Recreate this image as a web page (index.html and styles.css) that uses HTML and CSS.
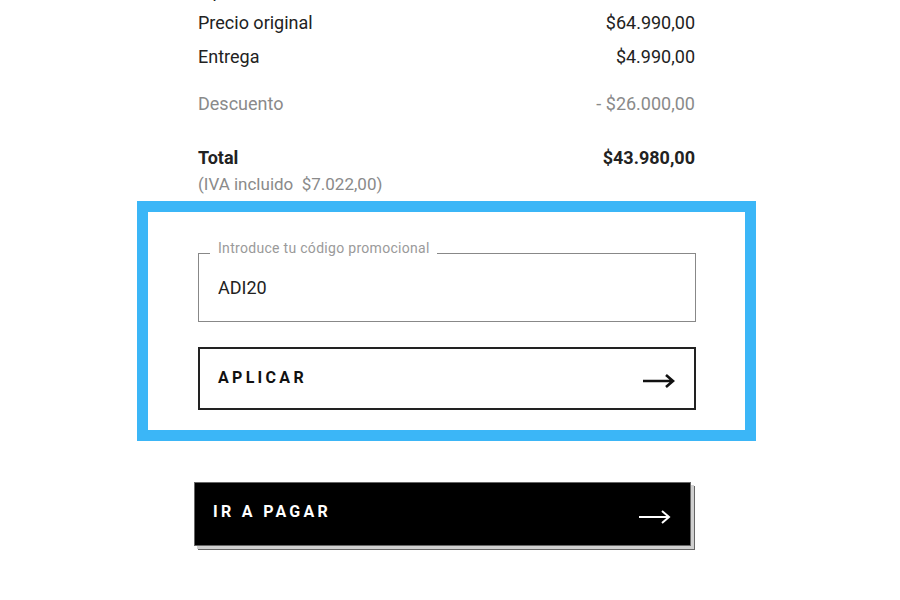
FILE: index.html
```html
<!DOCTYPE html>
<html lang="es">
<head>
    <meta charset="UTF-8">
    <meta name="viewport" content="width=device-width, initial-scale=1.0">
    <title>Resumen del pedido</title>
    <link rel="stylesheet" href="styles.css">
</head>
<body>

<div class="summary">
    <div class="row">
        <span>1 producto</span>
        <span>$64.990,00</span>
    </div>
    <div class="row">
        <span>Precio original</span>
        <span>$64.990,00</span>
    </div>
    <div class="row">
        <span>Entrega</span>
        <span>$4.990,00</span>
    </div>
    <div class="row discount">
        <span>Descuento</span>
        <span>- $26.000,00</span>
    </div>
    <div class="row total">
        <span>Total</span>
        <span>$43.980,00</span>
    </div>
    <div class="tax">(IVA incluido&nbsp; $7.022,00)</div>
</div>

<div class="promo-box">
    <div class="promo-field">
        <label for="promo">Introduce tu código promocional</label>
        <input type="text" id="promo" value="ADI20">
    </div>
    <button class="btn btn-outline">
        <span>APLICAR</span>
        <svg width="34" height="16" viewBox="0 0 34 16"><path d="M1 8h30M24 2l7 6-7 6" fill="none" stroke="currentColor" stroke-width="2.6"/></svg>
    </button>
</div>

<div class="checkout">
    <button class="btn btn-dark">
        <span>IR A PAGAR</span>
        <svg width="34" height="16" viewBox="0 0 34 16"><path d="M1 8h30M24 2l7 6-7 6" fill="none" stroke="currentColor" stroke-width="2"/></svg>
    </button>
</div>

</body>
</html>
```

FILE: styles.css
```css
body {
    margin: 0;
    background-color: #fff;
    color: #222;
    font-family: Roboto, "Noto Sans", sans-serif;
}
.summary {
    width: 497px;
    margin: -24px 0 0 198px;
}
.row {
    display: flex;
    justify-content: space-between;
    font-size: 18px;
    line-height: 34px;
}
.row:first-child {
    line-height: 30px;
}
.discount {
    margin-top: 13px;
    color: #8a8a8a;
}
.total {
    margin-top: 24px;
    line-height: 26px;
    font-weight: bold;
}
.tax {
    margin-top: 2px;
    font-size: 17px;
    line-height: 22px;
    color: #8a8a8a;
}
.promo-box {
    box-sizing: border-box;
    width: 619px;
    margin: 6px 0 0 137px;
    padding: 41px 49px 20px 50px;
    border: 11px solid #3bb6f7;
}
.promo-field {
    position: relative;
    height: 69px;
    border: 1px solid #888;
    box-sizing: border-box;
}
.promo-field label {
    position: absolute;
    top: -14px;
    left: 11px;
    padding: 0 7px 0 8px;
    background-color: #fff;
    color: #9a9a9a;
    font-size: 14px;
    letter-spacing: 0.3px;
    line-height: 16px;
}
.promo-field input {
    box-sizing: border-box;
    width: 100%;
    height: 100%;
    padding: 0 0 0 19px;
    border: none;
    outline: none;
    background: none;
    font-family: inherit;
    font-size: 18px;
    color: #222;
}
.btn {
    box-sizing: border-box;
    display: flex;
    align-items: center;
    justify-content: space-between;
    width: 100%;
    font-family: inherit;
    font-size: 16px;
    font-weight: bold;
    letter-spacing: 3.3px;
    cursor: pointer;
}
.btn-outline {
    height: 63px;
    margin-top: 25px;
    padding: 0 18px 0 18px;
    border: 2px solid #222;
    background-color: #fff;
    color: #111;
}
.btn-outline span {
    margin-top: -3px;
}
.btn-outline svg {
    margin-top: 4px;
}
.checkout {
    width: 497px;
    margin: 41px 0 40px 194px;
}
.btn-dark {
    height: 64px;
    padding: 0 18px 0 18px;
    border: 1px solid #666;
    background-color: #000;
    color: #fff;
    box-shadow: 3px 3px 0 0 #d0d0d0, 4px 4px 0 0 #666;
}
.btn-dark span {
    margin-top: -5px;
}
.btn-dark svg {
    margin-top: 6px;
}
```
